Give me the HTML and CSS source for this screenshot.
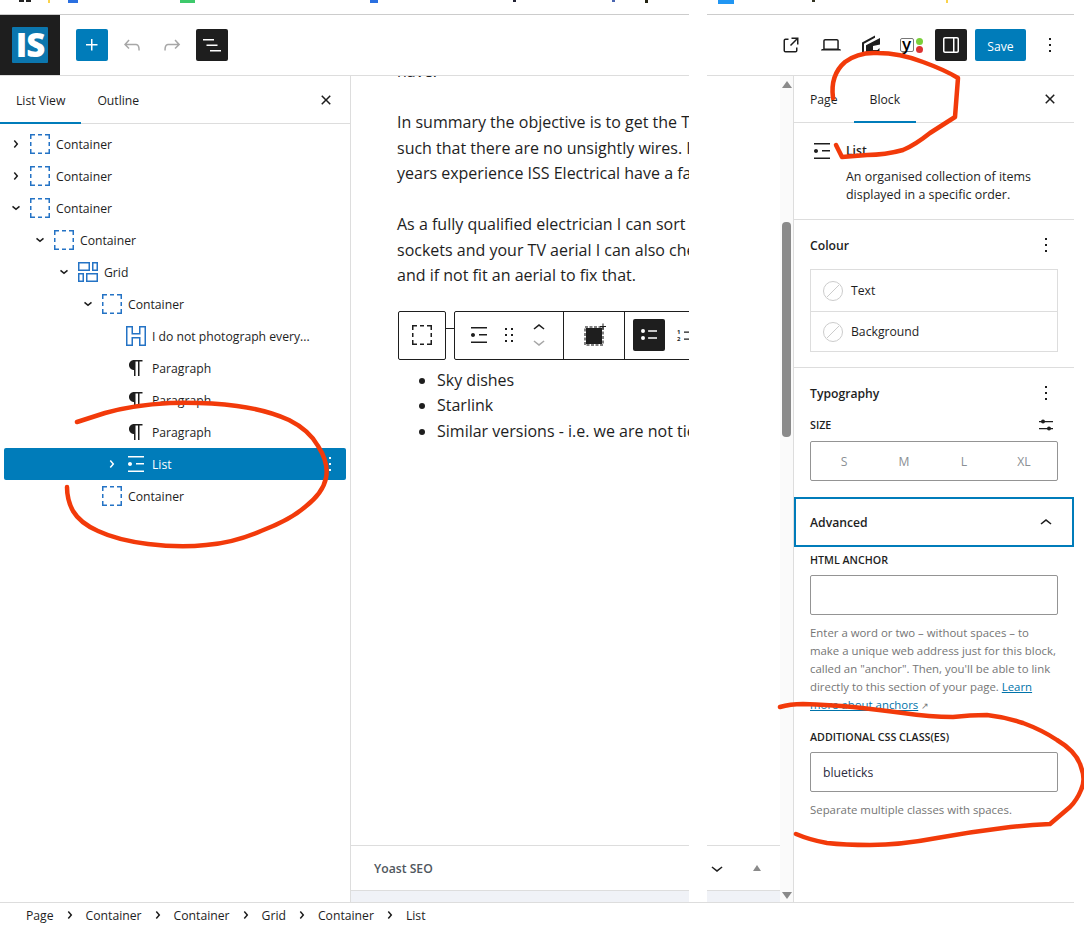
FILE: index.html
```html
<!DOCTYPE html>
<html lang="en">

<head>
  <meta charset="UTF-8">
  <title>Edit page</title>
  <link rel="stylesheet" href="styles.css">
</head>

<body>
  <svg class="defs">
    <symbol id="i-chev-r" viewBox="0 0 24 24"><path d="M10.8622 8.04053L14.2805 12.0286L10.8622 16.0167L9.72327 15.0405L12.3049 12.0286L9.72327 9.01672L10.8622 8.04053Z"/></symbol>
    <symbol id="i-chev-d" viewBox="0 0 24 24"><path d="m15.99 10.889-3.988 3.418-3.988-3.418.976-1.14 3.012 2.582 3.012-2.581.976 1.139Z"/></symbol>
    <symbol id="i-close" viewBox="0 0 24 24"><path d="M12 13.06l3.712 3.713 1.061-1.06L13.061 12l3.712-3.712-1.06-1.06L12 10.938 8.288 7.227l-1.061 1.06L10.939 12l-3.712 3.712 1.06 1.061L12 13.061z"/></symbol>
    <symbol id="i-more" viewBox="0 0 24 24"><path d="M13 19h-2v-2h2v2zm0-6h-2v-2h2v2zm0-6h-2V5h2v2z"/></symbol>
    <symbol id="i-para" viewBox="0 0 24 24"><path d="m9.99609 14v-.2251l.00391.0001v6.225h1.5v-14.5h2.5v14.5h1.5v-14.5h3v-1.5h-8.50391c-2.76142 0-5 2.23858-5 5 0 2.7614 2.23858 5 5 5z"/></symbol>
    <symbol id="i-list" viewBox="0 0 24 24"><path d="M4 4v1.5h16V4H4zm8 8.5h8V11h-8v1.5zM4 20h16v-1.5H4V20zm4-8c0-1.1-.9-2-2-2s-2 .9-2 2 .9 2 2 2 2-.9 2-2z"/></symbol>
    <symbol id="i-box" viewBox="0 0 20 20"><path d="M.75 5V.75H5M8 .75h4M15 .75h4.25V5M19.25 8v4M19.25 15v4.25H15M12 19.25H8M5 19.25H.75V15M.75 12V8" fill="none" stroke="currentColor" stroke-width="1.5"/></symbol>
    <symbol id="i-nocolor" viewBox="0 0 20 20"><circle cx="10" cy="10" r="9.5" fill="#fff" stroke="#ccc"/><path d="M4 16 16 4" stroke="#ccc"/></symbol>
  </svg>

  <div class="page">
    <div class="strip">
      <svg width="1084" height="5">
        <rect x="19" width="5" height="2" fill="#222"/>
        <rect x="26" width="5" height="2" fill="#222"/>
        <rect x="48" width="2" height="3" fill="#fbd34a"/>
        <rect x="68" width="10" height="3" fill="#2a6fe0"/>
        <rect x="180" width="15" height="3" fill="#3ec96b"/>
        <rect x="370" width="8" height="3" fill="#2a6fe0"/>
        <rect x="513" width="3" height="2" fill="#223"/>
        <rect x="612" width="3" height="2" fill="#4a66b0"/>
        <rect x="645" width="3" height="3" fill="#221"/>
        <rect x="718" width="16" height="4" fill="#2196f3"/>
        <rect x="812" width="3" height="2" fill="#332"/>
        <rect x="946" width="2" height="3" fill="#fbd34a"/>
      </svg>
    </div>

    <header class="topbar">
      <div class="logoCell"><div class="logo">IS</div></div>
      <div class="tools">
        <button class="iconBtn primary"><svg width="24" height="24" viewBox="0 0 24 24"><path d="M11 12.5V17.5H12.5V12.5H17.5V11H12.5V6H11V11H6V12.5H11Z"/></svg></button>
        <button class="iconBtn muted"><svg width="24" height="24" viewBox="0 0 24 24"><path d="M18.3 11.7c-.6-.6-1.4-.9-2.3-.9H6.7l2.9-3.3-1.1-1-4.5 5L8.5 16l1-1-2.7-2.7H16c.5 0 .9.2 1.3.5 1 1 1 3.4 1 4.5v.3h1.5v-.2c0-1.5 0-4.3-1.5-5.7z"/></svg></button>
        <button class="iconBtn muted"><svg width="24" height="24" viewBox="0 0 24 24"><path d="M15.6 6.5l-1.1 1 2.9 3.3H8c-.9 0-1.7.3-2.3.9-1.4 1.5-1.4 4.2-1.4 5.6v.2h1.5v-.3c0-1.1 0-3.5 1-4.5.3-.3.7-.5 1.3-.5h9.2L14.5 15l1.1 1.1 4.6-4.6-4.6-5z"/></svg></button>
        <button class="iconBtn dark"><svg width="24" height="24" viewBox="0 0 24 24"><path d="M3 6h11v1.5H3V6Zm3.5 5.5h11V13h-11v-1.5ZM21 17H10v1.5h11V17Z"/></svg></button>
      </div>
      <div class="tools right">
        <button class="iconBtn"><svg width="24" height="24" viewBox="0 0 24 24"><path d="M19.5 4.5h-7V6h4.44l-5.97 5.97 1.06 1.06L18 7.06v4.44h1.5v-7Zm-13 1a2 2 0 0 0-2 2v10a2 2 0 0 0 2 2h10a2 2 0 0 0 2-2v-3H17v3a.5.5 0 0 1-.5.5h-10a.5.5 0 0 1-.5-.5v-10a.5.5 0 0 1 .5-.5h3V5.5h-3Z"/></svg></button>
        <button class="iconBtn"><svg width="24" height="24" viewBox="0 0 24 24"><path d="M20.5 16h-.7V8c0-1.1-.9-2-2-2H6.2c-1.1 0-2 .9-2 2v8h-.7c-.8 0-1.5.7-1.5 1.5h20c0-.8-.7-1.5-1.5-1.5zM5.7 8c0-.3.2-.5.5-.5h11.6c.3 0 .5.2.5.5v7.6H5.7V8z"/></svg></button>
        <button class="iconBtn"><svg width="24" height="24" viewBox="0 0 24 24"><path d="M3 22V9.500L16 2.500v2.200L5 10.700V22zM7 22v-9.800L21 5v6.500l-7 1.600V17h4.500l2-2v7z"/></svg></button>
        <button class="iconBtn">
          <span class="yoast"><span class="yoastBox">y</span><span class="yoastDots"><i class="dot green"></i><i class="dot red"></i></span></span>
        </button>
        <button class="iconBtn dark"><svg width="24" height="24" viewBox="0 0 24 24"><path fill-rule="evenodd" d="M18 4H6c-1.1 0-2 .9-2 2v12c0 1.1.9 2 2 2h12c1.1 0 2-.9 2-2V6c0-1.1-.9-2-2-2zm-4 14.500H6c-.3 0-.5-.2-.5-.5V6c0-.3.2-.5.5-.5h8v13zm4.500-.5c0 .3-.2.5-.5.5h-2.500v-13H18c.3 0 .5.2.5.5v12z"/></svg></button>
        <button class="saveBtn">Save</button>
        <button class="iconBtn"><svg width="24" height="24"><use href="#i-more"/></svg></button>
      </div>
    </header>

    <div class="main">
      <aside class="listPanel">
        <div class="tabs tabsLeft">
          <span class="tab on">List View</span>
          <span class="tab">Outline</span>
          <svg class="tabClose" width="24" height="24"><use href="#i-close"/></svg>
        </div>
        <div class="tree">
          <div class="row lv0"><svg class="chev" width="24" height="24"><use href="#i-chev-r"/></svg><svg class="tIcon" width="20" height="20"><use href="#i-box"/></svg><span>Container</span></div>
          <div class="row lv0"><svg class="chev" width="24" height="24"><use href="#i-chev-r"/></svg><svg class="tIcon" width="20" height="20"><use href="#i-box"/></svg><span>Container</span></div>
          <div class="row lv0"><svg class="chev" width="24" height="24"><use href="#i-chev-d"/></svg><svg class="tIcon" width="20" height="20"><use href="#i-box"/></svg><span>Container</span></div>
          <div class="row lv1"><svg class="chev" width="24" height="24"><use href="#i-chev-d"/></svg><svg class="tIcon" width="20" height="20"><use href="#i-box"/></svg><span>Container</span></div>
          <div class="row lv2"><svg class="chev" width="24" height="24"><use href="#i-chev-d"/></svg>
            <svg class="tIcon outline" width="20" height="20" viewBox="0 0 20 20"><rect x=".75" y=".75" width="10.500" height="7.500"/><rect x="14.750" y=".75" width="4.500" height="7.500"/><rect x=".75" y="11.750" width="4.500" height="7.500"/><rect x="8.750" y="11.750" width="10.500" height="7.500"/></svg>
            <span>Grid</span></div>
          <div class="row lv3"><svg class="chev" width="24" height="24"><use href="#i-chev-d"/></svg><svg class="tIcon" width="20" height="20"><use href="#i-box"/></svg><span>Container</span></div>
          <div class="row lv4 noChev">
            <svg class="tIcon outline" width="20" height="20" viewBox="0 0 20 20"><path d="M.75.75h5.500v7h7.500v-7h5.500v18.500h-5.500v-7.500h-7.500v7.500H.75z"/></svg>
            <span>I do not photograph every...</span></div>
          <div class="row lv4 noChev"><svg class="gIcon" width="24" height="24"><use href="#i-para"/></svg><span>Paragraph</span></div>
          <div class="row lv4 noChev"><svg class="gIcon" width="24" height="24"><use href="#i-para"/></svg><span>Paragraph</span></div>
          <div class="row lv4 noChev"><svg class="gIcon" width="24" height="24"><use href="#i-para"/></svg><span>Paragraph</span></div>
          <div class="row lv4 selected"><svg class="chev" width="24" height="24"><use href="#i-chev-r"/></svg><svg class="gIcon" width="24" height="24"><use href="#i-list"/></svg><span>List</span><svg class="rowMore" width="24" height="24"><use href="#i-more"/></svg></div>
          <div class="row lv3 noChev"><svg class="tIcon" width="20" height="20"><use href="#i-box"/></svg><span>Container</span></div>
        </div>
      </aside>

      <section class="center">
        <div class="editor">
          <div class="canvas">
            <div class="doc">
              <p class="firstP">have.</p>
              <p>In summary the objective is to get the TV<br>such that there are no unsightly wires. If<br>years experience ISS Electrical have a fair</p>
              <p>As a fully qualified electrician I can sort your<br>sockets and your TV aerial I can also check<br>and if not fit an aerial to fix that.</p>

              <div class="blockBar">
                <div class="barBox single">
                  <svg width="20" height="20"><use href="#i-box"/></svg>
                </div>
                <div class="barLink"></div>
                <div class="barBox wide">
                  <div class="barGroup moverGroup">
                    <svg width="24" height="24"><use href="#i-list"/></svg>
                    <svg width="24" height="24" viewBox="0 0 24 24"><path d="M8 7h2V5H8v2zm0 6h2v-2H8v2zm0 6h2v-2H8v2zm6-14v2h2V5h-2zm0 8h2v-2h-2v2zm0 6h2v-2h-2v2z"/></svg>
                    <div class="mover">
                      <svg width="24" height="14" viewBox="0 5 24 14"><path d="M6.500 12.400L12 8l5.500 4.400-.9 1.200L12 10l-4.500 3.600-1-1.200z"/></svg>
                      <svg class="greyIcon" width="24" height="14" viewBox="0 5 24 14"><path d="M17.500 11.600L12 16l-5.500-4.400.9-1.200L12 14l4.600-3.600 1 1.200z"/></svg>
                    </div>
                  </div>
                  <div class="barGroup transformGroup">
                    <svg width="24" height="24" viewBox="0 0 24 24">
                      <rect x="4" y="5" width="16" height="16" fill="#1e1e1e"/>
                      <rect x="3" y="4" width="18" height="18" fill="none" stroke="#808080" stroke-width="2" stroke-dasharray="3 1.500"/>
                      <path d="M21 0.500v6M18 3.500h6" stroke="#1e1e1e" fill="none"/>
                    </svg>
                  </div>
                  <div class="barGroup listGroup">
                    <span class="iconBtn dark"><svg width="24" height="24" viewBox="0 0 24 24"><path d="M11.100 15.800H20v-1.500h-8.900v1.500zm0-8.600v1.500H20V7.200h-8.900zM8 8a2 2 0 1 1-4 0 2 2 0 0 1 4 0zm0 7a2 2 0 1 1-4 0 2 2 0 0 1 4 0z"/></svg></span>
                    <svg class="numbered" width="24" height="24" viewBox="0 0 24 24">
                      <text x="5" y="10.500" class="numText">1</text>
                      <text x="5" y="17.500" class="numText">2</text>
                      <path d="M12 8.500h6v1.200h-6zM12 15.500h6v1.200h-6z"/>
                    </svg>
                  </div>
                </div>
              </div>

              <ul class="docList">
                <li>Sky dishes</li>
                <li>Starlink</li>
                <li>Similar versions - i.e. we are not tied to any one</li>
              </ul>
            </div>
          </div>
          <div class="yoastBar">
            <span class="yoastTitle">Yoast SEO</span>
            <svg class="yoastChev" width="24" height="24" viewBox="0 0 24 24"><path d="M17.500 11.600L12 16l-5.500-4.400.9-1.200L12 14l4.600-3.600 1 1.200z"/></svg>
            <i class="tri up small"></i>
          </div>
          <div class="metaEnd"></div>
        </div>
        <div class="scrollbar">
          <i class="tri up"></i>
          <div class="scrollTrack"><div class="thumb"></div></div>
          <i class="tri down"></i>
        </div>
      </section>

      <aside class="sidebar">
        <div class="tabs tabsRight">
          <span class="tab">Page</span>
          <span class="tab on">Block</span>
          <svg class="tabClose" width="24" height="24"><use href="#i-close"/></svg>
        </div>

        <div class="blockCard">
          <svg width="24" height="24"><use href="#i-list"/></svg>
          <div>
            <div class="cardTitle">List</div>
            <div class="cardDesc">An organised collection of items<br>displayed in a specific order.</div>
          </div>
        </div>

        <div class="panel">
          <div class="panelHead"><span>Colour</span><svg width="24" height="24"><use href="#i-more"/></svg></div>
          <div class="colorBox">
            <div class="colorRow"><svg width="20" height="20"><use href="#i-nocolor"/></svg>Text</div>
            <div class="colorRow"><svg width="20" height="20"><use href="#i-nocolor"/></svg>Background</div>
          </div>
        </div>

        <div class="panel typo">
          <div class="panelHead"><span>Typography</span><svg width="24" height="24"><use href="#i-more"/></svg></div>
          <div class="sizeHead">
            <span class="label">SIZE</span>
            <svg width="24" height="24" viewBox="0 0 24 24"><path d="M5 8h14v1.200H5zM5 15h14v1.200H5z"/><circle cx="9" cy="8.600" r="2"/><circle cx="15" cy="15.600" r="2"/></svg>
          </div>
          <div class="sizeBox"><span>S</span><span>M</span><span>L</span><span>XL</span></div>
        </div>

        <div class="advHead">
          <span>Advanced</span>
          <svg width="24" height="24" viewBox="0 0 24 24"><path d="M6.500 12.400L12 8l5.500 4.400-.9 1.200L12 10l-4.500 3.600-1-1.200z"/></svg>
        </div>

        <div class="advBody">
          <div class="label">HTML ANCHOR</div>
          <div class="field"></div>
          <div class="help">Enter a word or two – without spaces – to<br>make a unique web address just for this block,<br>called an "anchor". Then, you'll be able to link<br>directly to this section of your page. <a href="#">Learn<br>more about anchors</a> <span class="ext">↗</span></div>
          <div class="label second">ADDITIONAL CSS CLASS(ES)</div>
          <div class="field">blueticks</div>
          <div class="help">Separate multiple classes with spaces.</div>
        </div>
      </aside>
    </div>

    <footer class="crumbs">
      <span>Page</span><svg width="16" height="24" viewBox="4 0 16 24"><use href="#i-chev-r" width="24" height="24" x="0"/></svg>
      <span>Container</span><svg width="16" height="24" viewBox="4 0 16 24"><use href="#i-chev-r" width="24" height="24"/></svg>
      <span>Container</span><svg width="16" height="24" viewBox="4 0 16 24"><use href="#i-chev-r" width="24" height="24"/></svg>
      <span>Grid</span><svg width="16" height="24" viewBox="4 0 16 24"><use href="#i-chev-r" width="24" height="24"/></svg>
      <span>Container</span><svg width="16" height="24" viewBox="4 0 16 24"><use href="#i-chev-r" width="24" height="24"/></svg>
      <span>List</span>
    </footer>
  </div>

  <!-- white seam where the two screenshots were stuck together -->
  <div class="seam"></div>

  <!-- red pen marks drawn on top -->
  <svg class="scribble" width="1084" height="927">
    <path d="M833 98Q830 75 845 62Q858 52 877 53Q900 53 923 62Q945 70 958 78L955 117L930 133Q915 145 903 150Q885 155 867 155L842 157L836 145"/>
    <path d="M77 422L105 413Q133 405 170 403Q207 402 237 406Q267 410 289 420Q309 430 318 446Q329 463 326 478Q323 493 305 507Q290 520 261 531Q233 543 206 545Q180 548 148 544Q117 540 98 531Q80 523 73 511Q67 500 67 487"/>
    <path d="M780 707Q790 704 803 704Q830 705 853 707Q880 710 903 713Q930 717 953 717Q970 715 987 715Q1005 717 1023 723Q1042 730 1057 740Q1077 752 1081 767Q1086 780 1081 790Q1077 800 1070 807L1050 824Q1025 825 1003 828Q970 832 937 838Q900 845 870 845Q845 845 827 843Q810 840 796 834"/>
  </svg>
</body>
</html>
```

FILE: styles.css
```css
* {
  box-sizing: border-box;
}

body {
  margin: 0;
  width: 1084px;
  height: 927px;
  overflow: hidden;
  position: relative;
  background: #fff;
  color: #1e1e1e;
  font-family: "Open Sans", "Liberation Sans", sans-serif;
  font-size: 12.2px;
}

svg {
  fill: currentColor;
  flex: none;
  display: block;
}

button {
  border: none;
  background: none;
  padding: 0;
  font: inherit;
  color: inherit;
}

.defs {
  display: none;
}

.page {
  width: 1074px;
  height: 927px;
  display: flex;
  flex-direction: column;
}

.strip {
  height: 15px;
  border-bottom: 1px solid #ccc;
}

/* top bar */
.topbar {
  height: 61px;
  display: flex;
  border-bottom: 1px solid #ddd;
}

.logoCell {
  width: 60px;
  height: 60px;
  background: #1e1e1e;
  padding: 12px;
}

.logo {
  width: 36px;
  height: 36px;
  background: #0b76ae;
  color: #fff;
  font-size: 33px;
  font-weight: 800;
  line-height: 36px;
  letter-spacing: -1px;
  text-align: center;
  border-radius: 1px;
}

.tools {
  display: flex;
  align-items: center;
  gap: 8px;
  margin-left: 16px;
}

.tools.right {
  margin-left: auto;
  padding-right: 8px;
}

.iconBtn {
  width: 32px;
  height: 32px;
  display: flex;
  align-items: center;
  justify-content: center;
  border-radius: 2px;
  flex: none;
}

.primary {
  background: #007cba;
  color: #fff;
}

.dark {
  background: #1e1e1e;
  color: #fff;
}

.muted {
  color: #a7a7a7;
}

.saveBtn {
  width: 51px;
  height: 32px;
  padding-top: 2px;
  background: #007cba;
  color: #fff;
  border-radius: 2px;
}

.yoast {
  display: flex;
  align-items: center;
  gap: 2px;
}

.yoastBox {
  width: 14px;
  height: 14px;
  border: 1px solid #777;
  border-radius: 2px;
  color: #000;
  font-size: 17px;
  font-weight: 600;
  line-height: 10px;
  text-align: center;
}

.yoastDots {
  display: flex;
  flex-direction: column;
  gap: 1px;
}

.dot {
  display: block;
  width: 7px;
  height: 7px;
  border-radius: 50%;
}

.green {
  background: #7ad03a;
}

.red {
  background: #dc3232;
}

/* columns */
.main {
  flex: 1;
  display: flex;
  min-height: 0;
  border-bottom: 1px solid #ddd;
}

.listPanel {
  width: 351px;
  flex: none;
  border-right: 1px solid #ddd;
}

.tabs {
  display: flex;
  align-items: center;
  border-bottom: 1px solid #ddd;
  padding-right: 12px;
}

.tabsLeft {
  height: 48px;
}

.tabsRight {
  height: 47px;
}

.tab {
  height: 100%;
  display: flex;
  align-items: center;
  padding: 2px 16px 0;
  margin-bottom: -1px;
  border-bottom: 2px solid transparent;
}

.tab.on {
  border-bottom-color: #007cba;
}

.tabClose {
  margin-left: auto;
}

/* list view tree */
.tree {
  padding: 4px;
}

.row {
  height: 32px;
  display: flex;
  align-items: center;
  border-radius: 2px;
}

.lv0 { padding-left: 0; }
.lv1 { padding-left: 24px; }
.lv2 { padding-left: 48px; }
.lv3 { padding-left: 72px; }
.lv4 { padding-left: 96px; }

.chev {
  margin: 0 2px 0 0;
}

.noChev {
  padding-left: 122px;
}

.lv3.noChev {
  padding-left: 98px;
}

.tIcon {
  color: #2473c5;
  margin: 0 6px 0 0;
}

.outline {
  fill: none;
  stroke: currentColor;
  stroke-width: 1.5;
}

.gIcon {
  margin: 0 4px 0 -2px;
}

.selected {
  background: #007cba;
  color: #fff;
  font-weight: 500;
}

.rowMore {
  margin-left: auto;
  margin-right: 4px;
}

/* middle column */
.center {
  width: 442px;
  flex: none;
  display: flex;
}

.editor {
  flex: 1;
  min-width: 0;
  display: flex;
  flex-direction: column;
}

.canvas {
  flex: 1;
  min-height: 0;
  overflow: hidden;
}

.doc {
  width: 338px;
  overflow: hidden;
  padding-left: 46px;
  font-size: 16px;
  line-height: 25.5px;
  white-space: nowrap;
}

.doc p {
  margin: 25.5px 0 0;
}

.doc .firstP {
  margin-top: -17px;
}

.blockBar {
  display: flex;
  margin: 22px 0 8px 1px;
  height: 49px;
}

.barBox {
  height: 49px;
  border: 1px solid #1e1e1e;
  border-radius: 2px;
  display: flex;
  align-items: center;
  flex: none;
}

.single {
  width: 48px;
  justify-content: center;
}

.wide {
  width: 260px;
}

.barLink {
  width: 8px;
  height: 1px;
  margin-top: 17px;
  background: #1e1e1e;
  flex: none;
}

.barGroup {
  height: 47px;
  display: flex;
  align-items: center;
  border-right: 1px solid #1e1e1e;
  flex: none;
}

.moverGroup {
  width: 109px;
  padding-left: 12px;
  gap: 6px;
}

.mover {
  display: flex;
  flex-direction: column;
}

.greyIcon {
  color: #a7a7a7;
}

.transformGroup {
  width: 61px;
  justify-content: center;
}

.listGroup {
  border-right: none;
  padding-left: 8px;
  gap: 7px;
}

.numText {
  font-size: 6px;
  font-weight: 700;
}

.docList {
  margin: 0;
  padding-left: 40px;
}

/* yoast box under the editor */
.yoastBar {
  height: 46px;
  flex: none;
  display: flex;
  align-items: center;
  padding-left: 23px;
  border-top: 1px solid #ddd;
  border-bottom: 1px solid #ddd;
}

.yoastTitle {
  font-weight: 600;
  color: #50575e;
}

.yoastChev {
  margin-left: auto;
}

.tri {
  display: block;
  width: 0;
  height: 0;
  border-left: 5px solid transparent;
  border-right: 5px solid transparent;
  flex: none;
}

.tri.up {
  border-bottom: 7px solid #8a8a8a;
}

.tri.down {
  border-top: 7px solid #8a8a8a;
}

.tri.small {
  margin: 0 19px 0 24px;
  border-left-width: 4px;
  border-right-width: 4px;
  border-bottom-width: 6px;
}

.metaEnd {
  height: 11px;
  flex: none;
  background: #f0f2f7;
}

.scrollbar {
  width: 13px;
  flex: none;
  background: #fafafa;
  padding: 5px 1px 3px 1px;
  display: flex;
  flex-direction: column;
  align-items: center;
}

.scrollTrack {
  flex: 1;
  width: 100%;
  padding-top: 134px;
}

.thumb {
  width: 9px;
  height: 215px;
  margin: 0 auto;
  background: #8a8a8a;
  border-radius: 4px;
}

/* right sidebar */
.sidebar {
  width: 281px;
  flex: none;
  border-left: 1px solid #ddd;
}

.blockCard {
  height: 97px;
  display: flex;
  gap: 12px;
  padding: 16px 16px 0;
  border-bottom: 1px solid #ddd;
  line-height: 18px;
}

.cardTitle {
  font-weight: 600;
  margin: 3px 0 7px;
}

.cardDesc {
  font-size: 12.45px;
  margin-top: 8px;
}

.panel {
  border-bottom: 1px solid #ddd;
  padding: 13px 16px 15px;
}

.panelHead {
  height: 24px;
  display: flex;
  align-items: center;
  justify-content: space-between;
  font-weight: 600;
  margin-bottom: 12px;
}

.colorBox {
  border: 1px solid #ddd;
}

.colorRow {
  height: 41px;
  display: flex;
  align-items: center;
  gap: 8px;
  padding-left: 12px;
}

.colorRow + .colorRow {
  border-top: 1px solid #ddd;
  height: 40px;
}

.typo {
  padding-bottom: 16px;
  border-bottom: none;
  height: 129px;
}

.typo .panelHead {
  margin-bottom: 10px;
}

.sizeHead {
  height: 20px;
  display: flex;
  align-items: center;
  justify-content: space-between;
  margin-bottom: 6px;
}

.label {
  font-size: 10.7px;
  font-weight: 600;
  line-height: 18px;
}

.sizeBox {
  height: 40px;
  display: flex;
  padding: 0 3px;
  border: 1px solid #949494;
  border-radius: 2px;
  color: #8a8f94;
}

.sizeBox span {
  flex: 1;
  display: flex;
  align-items: center;
  justify-content: center;
}

.advHead {
  height: 50px;
  display: flex;
  align-items: center;
  justify-content: space-between;
  border: 2px solid #007cba;
  padding: 1px 14px 0;
  font-weight: 600;
}

.advBody {
  padding: 4px 16px 0;
}

.field {
  height: 40px;
  margin-top: 6px;
  padding-left: 12px;
  border: 1px solid #949494;
  border-radius: 2px;
  display: flex;
  align-items: center;
  color: #2c2c40;
}

.help {
  margin-top: 9px;
  color: #757575;
  font-size: 11.4px;
  line-height: 18px;
  white-space: nowrap;
}

.help a {
  color: #0073aa;
}

.ext {
  font-size: 9px;
}

.second {
  margin-top: 13px;
}

/* bottom path */
.crumbs {
  height: 24px;
  display: flex;
  align-items: center;
  gap: 8px;
  padding-left: 26px;
}

/* overlays */
.seam {
  position: absolute;
  left: 689px;
  top: 0;
  width: 18px;
  height: 902px;
  background: #fff;
}

.scribble {
  position: absolute;
  left: 0;
  top: 0;
  fill: none;
  stroke: #f23a0a;
  stroke-width: 4.5;
  stroke-linecap: round;
  stroke-linejoin: round;
}
```
